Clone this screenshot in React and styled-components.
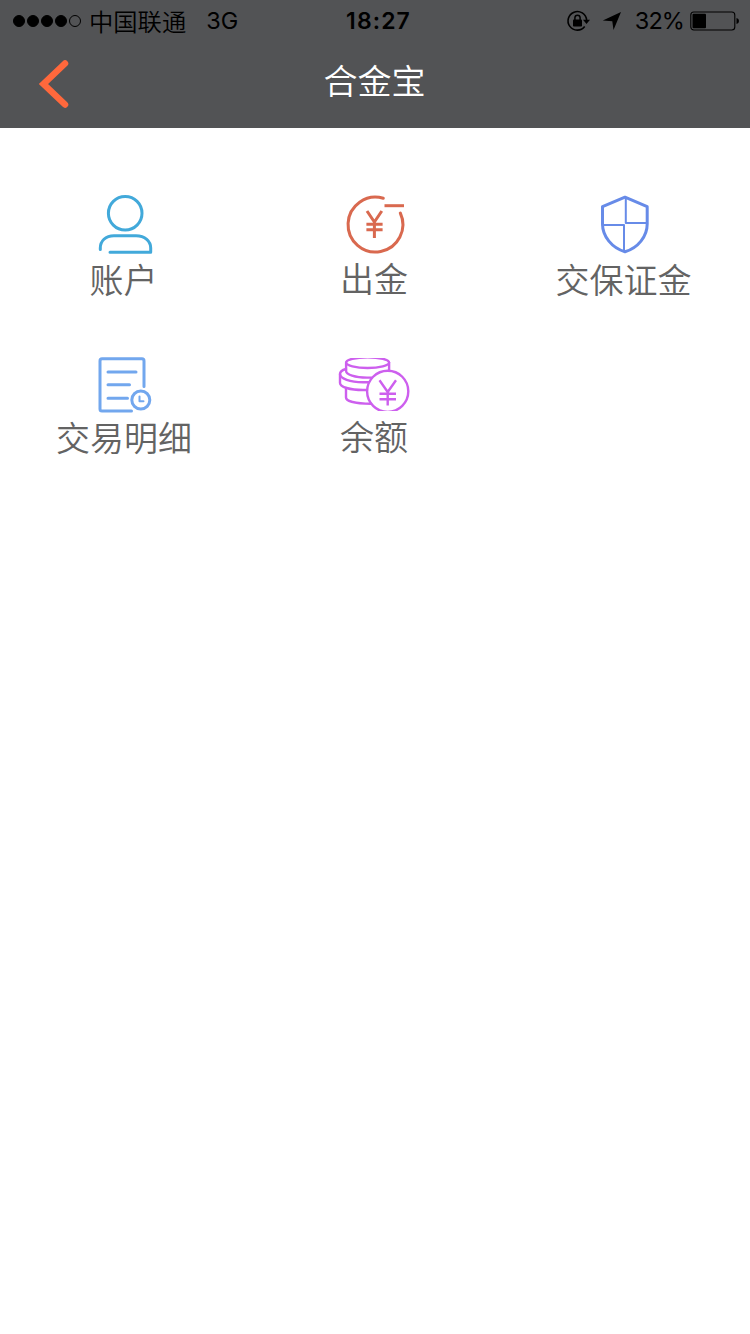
import React from 'react'
import styled, { createGlobalStyle } from 'styled-components'

const GlobalStyle = createGlobalStyle`
body {
  margin: 0;
  background: #fff;
  font-family: "Noto Sans CJK SC", "Noto Sans", sans-serif;
}
`

const Page = styled.div`
width: 750px;
min-height: 1334px;
background: #fff;
`

const Header = styled.header`
height: 128px;
background: #525355;
`

const StatusBar = styled.div`
height: 40px;
display: grid;
grid-template-columns: 1fr auto 1fr;
align-items: center;
padding: 0 10px 0 13px;
color: #000;
font-family: Inter, "Noto Sans CJK SC", sans-serif;
font-size: 24px;
line-height: 42px;
`

const StatusLeft = styled.div`
display: flex;
align-items: center;
`

const Dots = styled.div`
display: flex;
gap: 2px;
margin-right: 8px;
`

const Dot = styled.span`
box-sizing: border-box;
width: 12px;
height: 12px;
border-radius: 50%;
border: 1px solid #000;
background: ${props => props.$on ? '#000' : 'transparent'};
`

const Carrier = styled.span`
font-family: "Noto Sans CJK SC", sans-serif;
font-weight: 350;
font-size: 24.3px;
line-height: 40px;
margin-right: 20px;
`

const Network = styled.span`
font-size: 23.5px;
`

const Clock = styled.div`
font-weight: 600;
font-size: 23px;
letter-spacing: 1.1px;
padding-left: 4px;
`

const StatusRight = styled.div`
display: flex;
align-items: center;
justify-content: flex-end;
`

const LockIcon = styled.svg`
width: 24px;
height: 24px;
margin-right: 12px;
`

const LocationIcon = styled.svg`
width: 20px;
height: 20px;
margin-right: 13px;
`

const Percent = styled.span`
font-size: 23.5px;
letter-spacing: -0.9px;
margin-right: 6px;
`

const BatteryIcon = styled.svg`
width: 50px;
height: 20px;
`

const NavBar = styled.div`
height: 88px;
display: grid;
grid-template-columns: 1fr auto 1fr;
align-items: center;
`

const BackButton = styled.button`
width: 60px;
height: 60px;
padding: 0;
margin-left: 24px;
border: none;
background: none;
`

const Title = styled.h1`
margin: 0;
padding: 0 1px 8px 0;
color: #fff;
font-size: 34px;
font-weight: 350;
line-height: 50px;
`

const Menu = styled.main`
display: grid;
grid-template-columns: repeat(3, 250px);
grid-auto-rows: 162px;
padding-top: 64px;
`

const MenuItem = styled.div`
display: flex;
flex-direction: column;
align-items: center;
`

const MenuIcon = styled.svg`
width: 80px;
height: 64px;
fill: none;
stroke: ${props => props.$color};
stroke-width: ${props => props.$stroke || 3};
stroke-linecap: round;
stroke-linejoin: round;
`

const Label = styled.span`
color: #636363;
font-size: 34px;
font-weight: 350;
line-height: 44px;
margin-top: ${props => props.$top}px;
margin-right: ${props => props.$shift || 2}px;
`

const AccountIcon = () => (
  <MenuIcon viewBox="0 0 80 64" $color="#42a9da">
    <circle cx="40.2" cy="21.3" r="16.8" />
    <path d="M15.3 57.5V56C15.3 49 20.5 43.7 29 43.7H51C60 43.7 65.7 49.5 65.7 56V60.2H25" />
  </MenuIcon>
)

const WithdrawIcon = () => (
  <MenuIcon viewBox="0 0 80 64" $color="#d9694f">
    <path d="M48.3 6.3A27.4 27.4 0 1 0 65.3 21" />
    <path d="M49.5 13.7H69" strokeLinecap="butt" />
    <path d="M32 19L39.4 30L46.8 19M39.4 29V46M31.4 32.3H47.6M31.4 37.8H47.6" strokeLinecap="butt" />
  </MenuIcon>
)

const DepositIcon = () => (
  <MenuIcon viewBox="0 0 80 64" $color="#678be8">
    <path d="M40 5.2L62.2 14.7V32C62.2 44.5 53 56 40 59.8C27 56 17.5 44.5 17.5 32V14.7Z" />
    <path d="M40.8 6V31H62M17.5 33H39V59" strokeWidth="2" />
  </MenuIcon>
)

const DetailIcon = () => (
  <MenuIcon viewBox="0 0 80 64" $color="#72a7ee">
    <path d="M59 32.5V7Q59 4.8 57 4.8H17Q15 4.8 15 7V55Q15 57 17 57H46.5" />
    <path d="M23 17.9H51M23 30.8H44.5M23 44.3H42.5" />
    <circle cx="55.8" cy="46" r="9" />
    <path d="M54.5 42.5V47.2H58.5" strokeWidth="2" />
  </MenuIcon>
)

const BalanceIcon = () => (
  <MenuIcon viewBox="0 0 80 64" $color="#cd5fee" $stroke="2.4">
    <clipPath id="coins">
      <rect x="0" y="4" width="80" height="53" />
    </clipPath>
    <g clipPath="url(#coins)">
      <ellipse cx="32.6" cy="8.6" rx="21.5" ry="5.4" />
      <path d="M11.1 8.6V17C11.1 20.5 20 23.6 32 23.6H36.5M54.1 8.6V16" />
      <path d="M11 15C7.5 16 5 17.8 5 20C5 24.5 15 28.2 28 28.2H33.5" />
      <path d="M5 20V29C5 33 15 36 28 36H32" />
      <path d="M11 34V43.5C11 47 20 49.7 36 49.7" />
      <circle cx="52.7" cy="37.3" r="20.6" />
      <path d="M44.5 26.3L52.7 38L61 26.3M52.7 38V51.5M44.5 39.8H61M44.5 45.3H61" strokeLinecap="butt" />
    </g>
  </MenuIcon>
)

const items = [
  { label: '账户', icon: AccountIcon, top: 1, shift: 3 },
  { label: '出金', icon: WithdrawIcon, top: 0 },
  { label: '交保证金', icon: DepositIcon, top: 1, shift: 3 },
  { label: '交易明细', icon: DetailIcon, top: -3 },
  { label: '余额', icon: BalanceIcon, top: -4 },
]

const App = () => {
  return (
    <Page>
      <GlobalStyle />
      <Header>
        <StatusBar>
          <StatusLeft>
            <Dots>
              {[1, 2, 3, 4, 5].map(n => <Dot key={n} $on={n < 5} />)}
            </Dots>
            <Carrier>中国联通</Carrier>
            <Network>3G</Network>
          </StatusLeft>
          <Clock>18:27</Clock>
          <StatusRight>
            <LockIcon viewBox="0 0 24 24">
              <path d="M18.7 17.5A9.3 9.3 0 1 1 20.6 11" fill="none" stroke="#000" strokeWidth="1.6" />
              <path d="M17 10.8H24L20.5 15Z" />
              <rect x="7" y="10.5" width="9" height="7" rx="0.8" />
              <path d="M8.9 11V8.8a2.6 2.6 0 0 1 5.2 0V11" fill="none" stroke="#000" strokeWidth="1.5" />
            </LockIcon>
            <LocationIcon viewBox="0 0 20 20">
              <path d="M19 1L11.5 19L10.3 10.3L0.8 9.6Z" />
            </LocationIcon>
            <Percent>32%</Percent>
            <BatteryIcon viewBox="0 0 50 20">
              <rect x="0.8" y="1" width="44" height="18" rx="3" fill="none" stroke="#000" strokeWidth="1.1" />
              <rect x="2.5" y="2.8" width="13.5" height="14.4" rx="1" />
              <path d="M46.5 7Q49 7.5 49 10T46.5 13Z" />
            </BatteryIcon>
          </StatusRight>
        </StatusBar>
        <NavBar>
          <BackButton aria-label="返回">
            <svg width="60" height="60" viewBox="0 0 60 60">
              <path d="M41 9.5L19.5 30L41 50.5" fill="none" stroke="#ff683c" strokeWidth="6.5" strokeLinecap="round" />
            </svg>
          </BackButton>
          <Title>合金宝</Title>
        </NavBar>
      </Header>
      <Menu>
        {items.map(({ label, icon: Icon, top, shift }) => (
          <MenuItem key={label}>
            <Icon />
            <Label $top={top} $shift={shift}>{label}</Label>
          </MenuItem>
        ))}
      </Menu>
    </Page>
  )
}

export default App
